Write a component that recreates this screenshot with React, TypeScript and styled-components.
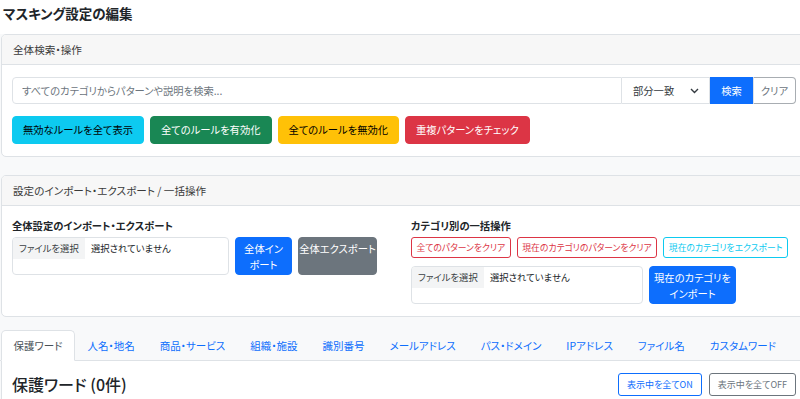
import React from "react";
import { createGlobalStyle, styled } from "styled-components";

const GlobalStyle = createGlobalStyle`
  html, body {
    margin: 0;
    overflow: hidden;
    background: #f8f9fa;
  }
  body {
    font-family: "Noto Sans CJK JP", "Noto Sans", sans-serif;
    font-feature-settings: "palt";
    font-size: 10.3px;
    color: #212529;
  }
  * {
    box-sizing: border-box;
  }
`;

type Variant = "info" | "success" | "warning" | "danger" | "primary" | "secondary";

const fills: Record<Variant, { bg: string; fg: string }> = {
  info: { bg: "#0dcaf0", fg: "#000" },
  success: { bg: "#198754", fg: "#fff" },
  warning: { bg: "#ffc107", fg: "#000" },
  danger: { bg: "#dc3545", fg: "#fff" },
  primary: { bg: "#0d6efd", fg: "#fff" },
  secondary: { bg: "#6c757d", fg: "#fff" },
};

const tabs = [
  "保護ワード",
  "人名・地名",
  "商品・サービス",
  "組織・施設",
  "識別番号",
  "メールアドレス",
  "パス・ドメイン",
  "IPアドレス",
  "ファイル名",
  "カスタムワード",
];

const App = () => {
  return (
    <Page>
      <GlobalStyle />
      <TitleBar>
        <Title>マスキング設定の編集</Title>
      </TitleBar>

      <Card $gap={18}>
        <CardHeader>全体検索・操作</CardHeader>
        <CardBody>
          <InputGroup>
            <SearchInput placeholder="すべてのカテゴリからパターンや説明を検索..." />
            <SelectBox>
              部分一致
              <svg width="9" height="6" viewBox="0 0 9 6">
                <polyline points="1,1 4.5,4.5 8,1" fill="none" stroke="#343a40" strokeWidth="1.4" />
              </svg>
            </SelectBox>
            <SearchButton>検索</SearchButton>
            <ClearButton>クリア</ClearButton>
          </InputGroup>
          <ButtonRow>
            <Btn $variant="info">無効なルールを全て表示</Btn>
            <Btn $variant="success">全てのルールを有効化</Btn>
            <Btn $variant="warning">全てのルールを無効化</Btn>
            <Btn $variant="danger">重複パターンをチェック</Btn>
          </ButtonRow>
        </CardBody>
      </Card>

      <Card $gap={13}>
        <CardHeader>設定のインポート・エクスポート / 一括操作</CardHeader>
        <CardBody>
          <Columns>
            <div>
              <SectionLabel>全体設定のインポート・エクスポート</SectionLabel>
              <FileRow>
                <FileBox $width={217}>
                  <FilePick>ファイルを選択</FilePick>
                  <FileName>選択されていません</FileName>
                </FileBox>
                <TallBtn $variant="primary" $width={57}>全体イン<br />ポート</TallBtn>
                <TallBtn $variant="secondary" $width={79}>全体エクスポート</TallBtn>
              </FileRow>
            </div>
            <div>
              <SectionLabel>カテゴリ別の一括操作</SectionLabel>
              <OutlineRow>
                <OutlineBtn $color="#dc3545">全てのパターンをクリア</OutlineBtn>
                <OutlineBtn $color="#dc3545">現在のカテゴリのパターンをクリア</OutlineBtn>
                <OutlineBtn $color="#0dcaf0">現在のカテゴリをエクスポート</OutlineBtn>
              </OutlineRow>
              <FileRow $top={8}>
                <FileBox $width={232}>
                  <FilePick>ファイルを選択</FilePick>
                  <FileName>選択されていません</FileName>
                </FileBox>
                <TallBtn $variant="primary" $width={87}>現在のカテゴリを<br />インポート</TallBtn>
              </FileRow>
            </div>
          </Columns>
        </CardBody>
      </Card>

      <TabList>
        {tabs.map((t, i) => (
          <Tab key={t} $active={i === 0}>{t}</Tab>
        ))}
      </TabList>
      <TabPanel>
        <PanelHead>
          <PanelTitle>保護ワード (0件)</PanelTitle>
          <PanelActions>
            <OutlineBtn $color="#0d6efd" $tall>表示中を全てON</OutlineBtn>
            <OutlineBtn $color="#6c757d" $tall>表示中を全てOFF</OutlineBtn>
          </PanelActions>
        </PanelHead>
      </TabPanel>
    </Page>
  );
};

const Page = styled.div`
  width: 807px;
`;

const TitleBar = styled.div`
  background: #fff;
  height: 34px;
  padding: 2px 0 0 3px;
`;

const Title = styled.h4`
  margin: 0;
  font-size: 13.5px;
  line-height: 22px;
  font-weight: 700;
`;

const Card = styled.div<{ $gap: number }>`
  margin: 0 0 ${(p) => p.$gap}px 1px;
  background: #fff;
  border: 1px solid #dee2e6;
  border-radius: 5px;
  overflow: hidden;
`;

const CardHeader = styled.div`
  background: #f7f7f7;
  border-bottom: 1px solid #dee2e6;
  padding: 6px 11px;
  font-size: 10.6px;
  line-height: 17px;
  color: #3a3a3a;
`;

const CardBody = styled.div`
  padding: 11px 10px 12px;
`;

const InputGroup = styled.div`
  display: flex;
  height: 27px;
  margin-top: 1px;
`;

const SearchInput = styled.input`
  flex: 1;
  min-width: 0;
  border: 1px solid #dee2e6;
  border-radius: 4px 0 0 4px;
  padding: 0 9px;
  font: inherit;
  color: #212529;
  &::placeholder {
    color: #6c757d;
  }
`;

const SelectBox = styled.div`
  width: 88px;
  display: flex;
  align-items: center;
  justify-content: space-between;
  padding: 0 10px 0 11px;
  border: 1px solid #dee2e6;
  border-left: none;
  color: #343a40;
`;

const SearchButton = styled.button`
  width: 43px;
  border: 1px solid #0d6efd;
  background: #0d6efd;
  color: #fff;
  font: inherit;
  padding: 0;
`;

const ClearButton = styled.button`
  width: 43px;
  border: 1px solid #a8adb2;
  border-left: 1px solid #dee2e6;
  border-radius: 0 4px 4px 0;
  background: #fff;
  color: #6c757d;
  font: inherit;
  padding: 0;
`;

const ButtonRow = styled.div`
  display: flex;
  gap: 6px;
  margin-top: 12px;
`;

const Btn = styled.button<{ $variant: Variant }>`
  height: 28px;
  padding: 0 10px;
  border: 1px solid ${(p) => fills[p.$variant].bg};
  border-radius: 4px;
  background: ${(p) => fills[p.$variant].bg};
  color: ${(p) => fills[p.$variant].fg};
  font: inherit;
  line-height: 18px;
  white-space: nowrap;
`;

const Columns = styled.div`
  display: grid;
  grid-template-columns: minmax(0, 1fr) minmax(0, 1fr);
  column-gap: 14px;
`;

const SectionLabel = styled.div`
  font-weight: 700;
  line-height: 17px;
  margin-bottom: 3px;
`;

const FileRow = styled.div<{ $top?: number }>`
  display: flex;
  gap: 6px;
  height: 38px;
  margin-top: ${(p) => p.$top ?? 0}px;
`;

const FileBox = styled.div<{ $width: number }>`
  width: ${(p) => p.$width}px;
  border: 1px solid #dee2e6;
  border-radius: 4px;
  background: #fff;
  display: flex;
  align-items: flex-start;
  overflow: hidden;
  font-size: 9.4px;
`;

const FilePick = styled.span`
  background: #f3f4f5;
  color: #3a3f44;
  padding: 0 6px;
  line-height: 21px;
`;

const FileName = styled.span`
  padding-left: 6px;
  line-height: 21px;
  color: #212529;
`;

const TallBtn = styled.button<{ $variant: Variant; $width: number }>`
  width: ${(p) => p.$width}px;
  display: flex;
  flex-direction: column;
  justify-content: flex-start;
  align-items: center;
  padding: 3px 2px 0;
  border: 1px solid ${(p) => fills[p.$variant].bg};
  border-radius: 4px;
  background: ${(p) => fills[p.$variant].bg};
  color: ${(p) => fills[p.$variant].fg};
  font: inherit;
  line-height: 16px;
  text-align: center;
  white-space: nowrap;
`;

const OutlineRow = styled.div`
  display: flex;
  gap: 6px;
`;

const OutlineBtn = styled.button<{ $color: string; $tall?: boolean }>`
  height: ${(p) => (p.$tall ? 23 : 21)}px;
  padding: 0 ${(p) => (p.$tall ? 8 : 4.5)}px;
  border: 1px solid ${(p) => p.$color};
  border-radius: 3px;
  background: #fff;
  color: ${(p) => p.$color};
  font: inherit;
  font-size: ${(p) => (p.$tall ? 9 : 8.8)}px;
  line-height: 15px;
  white-space: nowrap;
`;

const TabList = styled.div`
  display: flex;
  padding-left: 1px;
  border-bottom: 1px solid #dee2e6;
`;

const Tab = styled.div<{ $active?: boolean }>`
  flex-shrink: 0;
  white-space: nowrap;
  padding: 6px 11.5px;
  font-size: 10.5px;
  line-height: 17px;
  border: 1px solid ${(p) => (p.$active ? "#dee2e6" : "transparent")};
  border-bottom-color: ${(p) => (p.$active ? "#fff" : "transparent")};
  border-radius: 5px 5px 0 0;
  margin-bottom: -1px;
  background: ${(p) => (p.$active ? "#fff" : "transparent")};
  color: ${(p) => (p.$active ? "#495057" : "#0d6efd")};
`;

const TabPanel = styled.div`
  margin-left: 1px;
  background: #fff;
  border: 1px solid #dee2e6;
  border-top: none;
  padding: 12px 10px 40px;
`;

const PanelHead = styled.div`
  display: flex;
  justify-content: space-between;
  align-items: center;
`;

const PanelTitle = styled.h5`
  margin: 0;
  font-size: 16px;
  font-weight: 500;
  line-height: 23px;
`;

const PanelActions = styled.div`
  display: flex;
  gap: 7px;
`;

export default App;
